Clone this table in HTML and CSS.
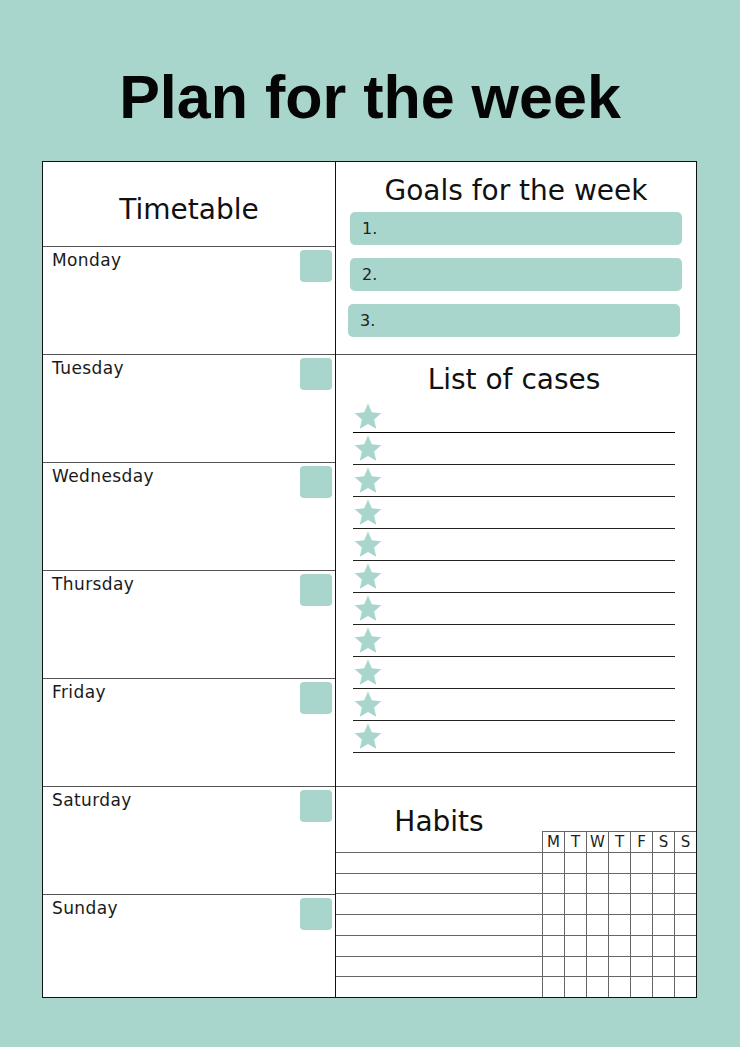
FILE: index.html
```html
<!DOCTYPE html>
<html lang="en">
<head>
<meta charset="utf-8">
<title>Plan for the week</title>
<link rel="stylesheet" href="styles.css">
</head>
<body>
<div class="page">
  <h1 class="title">Plan for the week</h1>
  <div class="sheet">
    <div class="timetable">
      <div class="tt-head">Timetable</div>
      <div class="day"><span class="day-name">Monday</span><span class="check"></span></div>
      <div class="day"><span class="day-name">Tuesday</span><span class="check"></span></div>
      <div class="day"><span class="day-name">Wednesday</span><span class="check"></span></div>
      <div class="day"><span class="day-name">Thursday</span><span class="check"></span></div>
      <div class="day"><span class="day-name">Friday</span><span class="check"></span></div>
      <div class="day"><span class="day-name">Saturday</span><span class="check"></span></div>
      <div class="day"><span class="day-name">Sunday</span><span class="check"></span></div>
    </div>
    <div class="side">
      <section class="goals">
        <h2 class="heading">Goals for the week</h2>
        <div class="goal-list">
          <div class="goal">1.</div>
          <div class="goal">2.</div>
          <div class="goal goal-shift">3.</div>
        </div>
      </section>
      <section class="cases">
        <h2 class="heading">List of cases</h2>
        <ul class="case-list">
          <li class="case"><svg class="star" viewBox="0 0 28 26"><polygon points="14,0.5 17.8,9.3 27.3,10.2 20.1,16.6 22.2,25.8 14,20.9 5.8,25.8 7.9,16.6 0.7,10.2 10.2,9.3"/></svg></li>
          <li class="case"><svg class="star" viewBox="0 0 28 26"><polygon points="14,0.5 17.8,9.3 27.3,10.2 20.1,16.6 22.2,25.8 14,20.9 5.8,25.8 7.9,16.6 0.7,10.2 10.2,9.3"/></svg></li>
          <li class="case"><svg class="star" viewBox="0 0 28 26"><polygon points="14,0.5 17.8,9.3 27.3,10.2 20.1,16.6 22.2,25.8 14,20.9 5.8,25.8 7.9,16.6 0.7,10.2 10.2,9.3"/></svg></li>
          <li class="case"><svg class="star" viewBox="0 0 28 26"><polygon points="14,0.5 17.8,9.3 27.3,10.2 20.1,16.6 22.2,25.8 14,20.9 5.8,25.8 7.9,16.6 0.7,10.2 10.2,9.3"/></svg></li>
          <li class="case"><svg class="star" viewBox="0 0 28 26"><polygon points="14,0.5 17.8,9.3 27.3,10.2 20.1,16.6 22.2,25.8 14,20.9 5.8,25.8 7.9,16.6 0.7,10.2 10.2,9.3"/></svg></li>
          <li class="case"><svg class="star" viewBox="0 0 28 26"><polygon points="14,0.5 17.8,9.3 27.3,10.2 20.1,16.6 22.2,25.8 14,20.9 5.8,25.8 7.9,16.6 0.7,10.2 10.2,9.3"/></svg></li>
          <li class="case"><svg class="star" viewBox="0 0 28 26"><polygon points="14,0.5 17.8,9.3 27.3,10.2 20.1,16.6 22.2,25.8 14,20.9 5.8,25.8 7.9,16.6 0.7,10.2 10.2,9.3"/></svg></li>
          <li class="case"><svg class="star" viewBox="0 0 28 26"><polygon points="14,0.5 17.8,9.3 27.3,10.2 20.1,16.6 22.2,25.8 14,20.9 5.8,25.8 7.9,16.6 0.7,10.2 10.2,9.3"/></svg></li>
          <li class="case"><svg class="star" viewBox="0 0 28 26"><polygon points="14,0.5 17.8,9.3 27.3,10.2 20.1,16.6 22.2,25.8 14,20.9 5.8,25.8 7.9,16.6 0.7,10.2 10.2,9.3"/></svg></li>
          <li class="case"><svg class="star" viewBox="0 0 28 26"><polygon points="14,0.5 17.8,9.3 27.3,10.2 20.1,16.6 22.2,25.8 14,20.9 5.8,25.8 7.9,16.6 0.7,10.2 10.2,9.3"/></svg></li>
          <li class="case"><svg class="star" viewBox="0 0 28 26"><polygon points="14,0.5 17.8,9.3 27.3,10.2 20.1,16.6 22.2,25.8 14,20.9 5.8,25.8 7.9,16.6 0.7,10.2 10.2,9.3"/></svg></li>
        </ul>
      </section>
      <section class="habits">
        <div class="habits-top">
          <h2 class="heading habits-title">Habits</h2>
          <div class="days-head"><span>M</span><span>T</span><span>W</span><span>T</span><span>F</span><span>S</span><span>S</span></div>
        </div>
        <div class="habit-row"><span class="habit-name"></span><span class="cell"></span><span class="cell"></span><span class="cell"></span><span class="cell"></span><span class="cell"></span><span class="cell"></span><span class="cell"></span></div>
        <div class="habit-row"><span class="habit-name"></span><span class="cell"></span><span class="cell"></span><span class="cell"></span><span class="cell"></span><span class="cell"></span><span class="cell"></span><span class="cell"></span></div>
        <div class="habit-row"><span class="habit-name"></span><span class="cell"></span><span class="cell"></span><span class="cell"></span><span class="cell"></span><span class="cell"></span><span class="cell"></span><span class="cell"></span></div>
        <div class="habit-row"><span class="habit-name"></span><span class="cell"></span><span class="cell"></span><span class="cell"></span><span class="cell"></span><span class="cell"></span><span class="cell"></span><span class="cell"></span></div>
        <div class="habit-row"><span class="habit-name"></span><span class="cell"></span><span class="cell"></span><span class="cell"></span><span class="cell"></span><span class="cell"></span><span class="cell"></span><span class="cell"></span></div>
        <div class="habit-row"><span class="habit-name"></span><span class="cell"></span><span class="cell"></span><span class="cell"></span><span class="cell"></span><span class="cell"></span><span class="cell"></span><span class="cell"></span></div>
        <div class="habit-row"><span class="habit-name"></span><span class="cell"></span><span class="cell"></span><span class="cell"></span><span class="cell"></span><span class="cell"></span><span class="cell"></span><span class="cell"></span></div>
      </section>
    </div>
  </div>
</div>
</body>
</html>
```

FILE: styles.css
```css
* { box-sizing: border-box; }

body {
  margin: 0;
  background: #a8d5cc;
  font-family: "DejaVu Sans", sans-serif;
  color: #111;
}

.page {
  width: 740px;
  height: 1047px;
}

.title {
  margin: 0;
  padding-top: 62px;
  font: bold 61px/70px "Liberation Sans", Arial, sans-serif;
  text-align: center;
  color: #050505;
}

.sheet {
  margin: 29px 0 0 42px;
  width: 655px;
  height: 837px;
  border: 1px solid #111;
  background: #fff;
  display: grid;
  grid-template-columns: 293px 1fr;
}

/* Timetable */
.timetable {
  display: flex;
  flex-direction: column;
  border-right: 1px solid #111;
}

.tt-head {
  height: 85px;
  padding-top: 32px;
  border-bottom: 1px solid #555;
  text-align: center;
  font-size: 28px;
  line-height: 32px;
}

.day {
  height: 108px;
  border-bottom: 1px solid #555;
  display: flex;
  justify-content: space-between;
  align-items: flex-start;
}

.day:last-child {
  height: auto;
  flex: 1;
  border-bottom: none;
}

.day-name {
  padding: 3px 0 0 9px;
  font-size: 17px;
  line-height: 20px;
  letter-spacing: 0.4px;
  color: #1a1a1a;
}

.check {
  width: 32px;
  height: 32px;
  margin: 3px 3px 0 0;
  border-radius: 4px;
  background: #a8d5cc;
}

/* Right side */
.side {
  display: flex;
  flex-direction: column;
}

.heading {
  margin: 0;
  font-weight: normal;
  font-size: 28px;
  line-height: 32px;
  text-align: center;
  color: #111;
}

.goals {
  height: 193px;
  padding: 13px 14px 0;
  border-bottom: 1px solid #555;
}

.goal-list {
  margin-top: 5px;
  display: flex;
  flex-direction: column;
  gap: 13px;
}

.goal {
  height: 33px;
  padding-left: 12px;
  border-radius: 5px;
  background: #a8d5cc;
  font-size: 16px;
  line-height: 33px;
  color: #222;
}

.goal-shift {
  margin: 0 2px 0 -2px;
}

.cases {
  height: 432px;
  padding: 9px 21px 0 17px;
  border-bottom: 1px solid #555;
}

.case-list {
  list-style: none;
  margin: 5px 0 0;
  padding: 0;
}

.case {
  height: 32px;
  padding: 2px 0 0 1px;
  border-bottom: 1px solid #222;
}

.case:first-child {
  border-bottom-color: #000;
}

.star {
  display: block;
  width: 28px;
  height: 26px;
  fill: #a8d5cc;
}

.habits {
  flex: 1;
  display: flex;
  flex-direction: column;
}

.habits-top {
  height: 65px;
  display: flex;
}

.habits-title {
  flex: 1;
  padding-top: 19px;
}

.days-head {
  align-self: flex-end;
  display: flex;
}

.days-head span {
  width: 22px;
  height: 21px;
  border-top: 1px solid #666;
  border-left: 1px solid #666;
  text-align: center;
  font-size: 15px;
  line-height: 20px;
  color: #222;
}

.habit-row {
  flex: 1;
  display: flex;
  border-top: 1px solid #666;
}

.habit-name {
  flex: 1;
}

.cell {
  width: 22px;
  border-left: 1px solid #666;
}
```
